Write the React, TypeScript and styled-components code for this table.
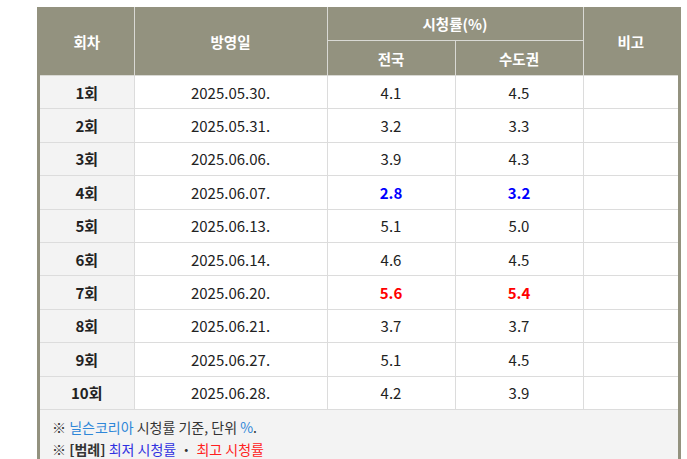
import React from "react";
import styled, { createGlobalStyle } from "styled-components";

const Global = createGlobalStyle`
  html, body { margin: 0; padding: 0; background: #fff; }
  body { font-family: "Noto Sans CJK KR", "Noto Sans", sans-serif; color: #222; }
`;

const Page = styled.div`
  padding: 7px 0 0 37px;
`;

const Box = styled.div`
  width: 638px;
  border-left: 3px solid #93927f;
  border-right: 3px solid #93927f;
  background: #f3f3f3;
`;

const Table = styled.table`
  width: 638px;
  border-collapse: collapse;
  table-layout: fixed;
  font-size: 15px;
`;

const Th = styled.th<{ h: number }>`
  background: #93927f;
  color: #fff;
  font-weight: 700;
  font-size: 14.5px;
  border: 1px solid #d9d9d4;
  border-top: none;
  padding: 0;
  height: ${(p) => p.h}px;
  &:first-child { border-left: none; }
  &:last-child { border-right: none; }
`;

const Td = styled.td<{ head?: boolean; tone?: "low" | "high" }>`
  height: 32.4px;
  padding: 0;
  text-align: center;
  border: 1px solid #dcdcdc;
  background: ${(p) => (p.head ? "#f3f3f3" : "#fff")};
  font-weight: ${(p) => (p.head || p.tone ? 700 : 400)};
  color: ${(p) => (p.tone === "low" ? "#0000ff" : p.tone === "high" ? "#ff0000" : "#222")};
  &:first-child { border-left: none; }
  &:last-child { border-right: none; }
`;

const Notes = styled.div`
  padding: 6px 12px 4px 12px;
  font-size: 14px;
  line-height: 22px;
  color: #333;
`;

const Blue = styled.span`
  color: #2f87d8;
`;
const Low = styled.span`
  color: #3030e0;
`;
const High = styled.span`
  color: #ff2020;
`;
const Bold = styled.b`
  font-weight: 700;
`;

type Row = { ep: string; date: string; a: string; b: string; tone?: "low" | "high" };

const rows: Row[] = [
  { ep: "1회", date: "2025.05.30.", a: "4.1", b: "4.5" },
  { ep: "2회", date: "2025.05.31.", a: "3.2", b: "3.3" },
  { ep: "3회", date: "2025.06.06.", a: "3.9", b: "4.3" },
  { ep: "4회", date: "2025.06.07.", a: "2.8", b: "3.2", tone: "low" },
  { ep: "5회", date: "2025.06.13.", a: "5.1", b: "5.0" },
  { ep: "6회", date: "2025.06.14.", a: "4.6", b: "4.5" },
  { ep: "7회", date: "2025.06.20.", a: "5.6", b: "5.4", tone: "high" },
  { ep: "8회", date: "2025.06.21.", a: "3.7", b: "3.7" },
  { ep: "9회", date: "2025.06.27.", a: "5.1", b: "4.5" },
  { ep: "10회", date: "2025.06.28.", a: "4.2", b: "3.9" },
];

export default function App() {
  return (
    <>
      <Global />
      <Page>
        <Box>
          <Table>
            <colgroup>
              <col style={{ width: 94 }} />
              <col style={{ width: 193 }} />
              <col style={{ width: 128 }} />
              <col style={{ width: 128 }} />
              <col style={{ width: 95 }} />
            </colgroup>
            <thead>
              <tr>
                <Th h={33} rowSpan={2}>회차</Th>
                <Th h={33} rowSpan={2}>방영일</Th>
                <Th h={33} colSpan={2}>시청률(%)</Th>
                <Th h={33} rowSpan={2}>비고</Th>
              </tr>
              <tr>
                <Th h={34}>전국</Th>
                <Th h={34}>수도권</Th>
              </tr>
            </thead>
            <tbody>
              {rows.map((r) => (
                <tr key={r.ep}>
                  <Td head>{r.ep}</Td>
                  <Td>{r.date}</Td>
                  <Td tone={r.tone}>{r.a}</Td>
                  <Td tone={r.tone}>{r.b}</Td>
                  <Td />
                </tr>
              ))}
            </tbody>
          </Table>
          <Notes>
            <div>
              ※ <Blue>닐슨코리아</Blue> 시청률 기준, 단위 <Blue>%</Blue>.
            </div>
            <div>
              ※ <Bold>[범례]</Bold> <Low>최저 시청률</Low> ・ <High>최고 시청률</High>
            </div>
          </Notes>
        </Box>
      </Page>
    </>
  );
}
